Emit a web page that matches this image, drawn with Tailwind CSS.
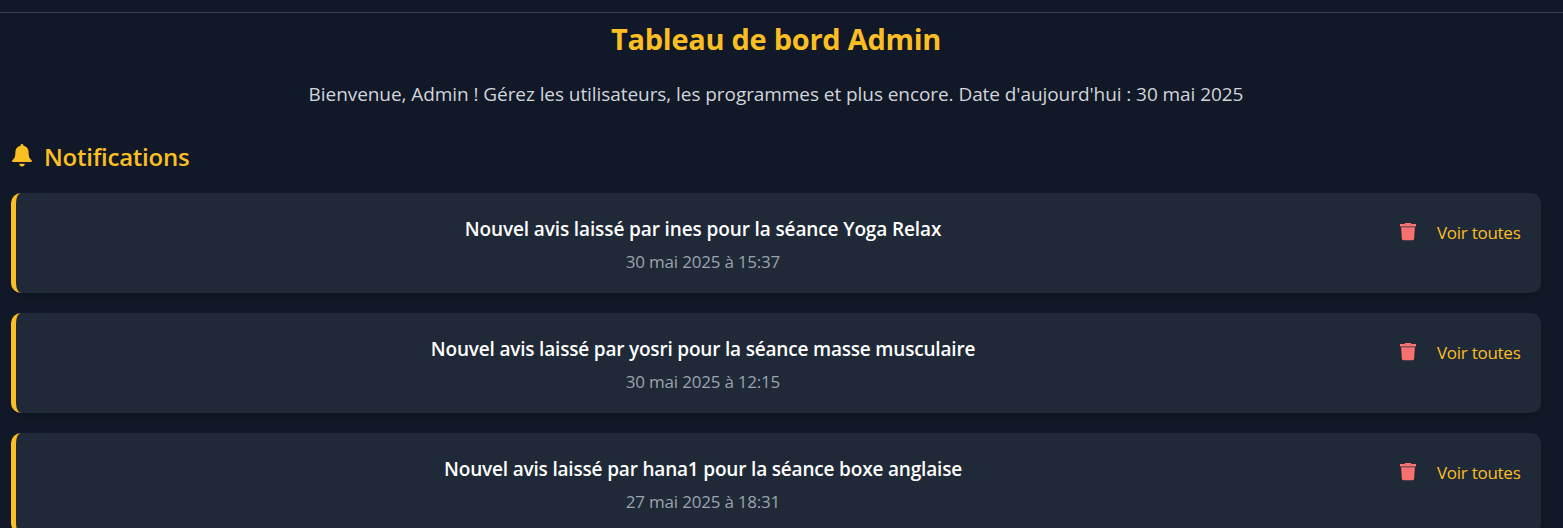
<!DOCTYPE html>
<html lang="fr">
<head>
<meta charset="utf-8">
<title>Tableau de bord Admin</title>
<script src="https://cdn.jsdelivr.net/npm/@tailwindcss/browser@4"></script>
</head>
<body class="h-[528px] overflow-hidden bg-[#111827] font-['Open_Sans','Noto_Sans',sans-serif]">
<svg class="hidden">
  <symbol id="trash" viewBox="0 0 16 18"><path d="M5.200 0h5.600l.7 1H16v2.400H0V1h4.500zM1.100 4.300h13.800l-.8 11.500a1.500 1.500 0 0 1-1.500 1.400H3.400a1.500 1.500 0 0 1-1.500-1.400z"/></symbol>
</svg>
<div class="h-[13px] border-b border-[#374151]"></div>
<main class="flex h-[515px] flex-col overflow-hidden pl-[11px] pr-[22px] pt-[7px]">
  <h1 class="h-[38px] whitespace-nowrap text-center text-[29px] font-bold leading-[38px] tracking-[-0.28px] text-[#fbbf24]">Tableau de bord Admin</h1>
  <p class="mt-[21px] h-[30px] whitespace-nowrap text-center text-[19px] leading-[30px] tracking-[-0.067px] text-[#d1d5db]">Bienvenue, Admin ! Gérez les utilisateurs, les programmes et plus encore. Date d'aujourd'hui : 30 mai 2025</p>
  <h2 class="mt-[30px] flex h-[36px] items-center text-[24px] font-semibold leading-[36px] tracking-[-0.25px] text-[#fbbf24]">
    <svg class="mb-1 mr-[11px] h-[23px] w-[22px]" viewBox="0 0 22 23" fill="currentColor"><path d="M11 0c.8 0 1.4.6 1.4 1.300v.5c3.300.6 5.200 3 5.200 6.200 0 4.700 1 6.300 2.900 8.100.8.8.5 2-.7 2H2.200c-1.200 0-1.500-1.200-.7-2C3.400 14.300 4.400 12.700 4.400 8c0-3.200 1.900-5.600 5.200-6.200v-.5C9.600.6 10.200 0 11 0zM8.200 19.800h5.600c0 1.500-1.200 2.800-2.800 2.800s-2.800-1.300-2.800-2.800z"/></svg>
    <span>Notifications</span>
  </h2>
  <div class="mt-[18px] flex flex-col gap-5">
    <section class="flex h-[100px] shrink-0 rounded-[10px] border-l-[5px] border-[#fbbf24] bg-[#1f2937] px-5 pt-5 shadow-md">
      <div class="flex-1 whitespace-nowrap text-center">
        <h3 class="h-8 text-[19px] font-semibold leading-8 tracking-[-0.115px] text-white">Nouvel avis laissé par ines pour la séance Yoga Relax</h3>
        <p class="h-8 text-[17px] leading-[33px] tracking-[-0.21px] text-[#9ca3af]">30 mai 2025 à 15:37</p>
      </div>
      <div class="flex h-10 w-[151px] items-center justify-end whitespace-nowrap">
        <svg class="mr-[21px] mb-[2px] h-[18px] w-4 text-[#f87171]" fill="currentColor"><use href="#trash"/></svg>
        <a class="w-[84px] text-[17px] tracking-[-0.27px] text-[#fbbf24]">Voir toutes</a>
      </div>
    </section>
    <section class="flex h-[100px] shrink-0 rounded-[10px] border-l-[5px] border-[#fbbf24] bg-[#1f2937] px-5 pt-5 shadow-md">
      <div class="flex-1 whitespace-nowrap text-center">
        <h3 class="h-8 text-[19px] font-semibold leading-8 tracking-[-0.19px] text-white">Nouvel avis laissé par yosri pour la séance masse musculaire</h3>
        <p class="h-8 text-[17px] leading-[33px] tracking-[-0.21px] text-[#9ca3af]">30 mai 2025 à 12:15</p>
      </div>
      <div class="flex h-10 w-[151px] items-center justify-end whitespace-nowrap">
        <svg class="mr-[21px] mb-[2px] h-[18px] w-4 text-[#f87171]" fill="currentColor"><use href="#trash"/></svg>
        <a class="w-[84px] text-[17px] tracking-[-0.27px] text-[#fbbf24]">Voir toutes</a>
      </div>
    </section>
    <section class="flex h-[100px] shrink-0 rounded-[10px] border-l-[5px] border-[#fbbf24] bg-[#1f2937] px-5 pt-5 shadow-md">
      <div class="flex-1 whitespace-nowrap text-center">
        <h3 class="h-8 text-[19px] font-semibold leading-8 tracking-[-0.18px] text-white">Nouvel avis laissé par hana1 pour la séance boxe anglaise</h3>
        <p class="h-8 text-[17px] leading-[33px] tracking-[-0.21px] text-[#9ca3af]">27 mai 2025 à 18:31</p>
      </div>
      <div class="flex h-10 w-[151px] items-center justify-end whitespace-nowrap">
        <svg class="mr-[21px] mb-[2px] h-[18px] w-4 text-[#f87171]" fill="currentColor"><use href="#trash"/></svg>
        <a class="w-[84px] text-[17px] tracking-[-0.27px] text-[#fbbf24]">Voir toutes</a>
      </div>
    </section>
  </div>
</main>
</body>
</html>
